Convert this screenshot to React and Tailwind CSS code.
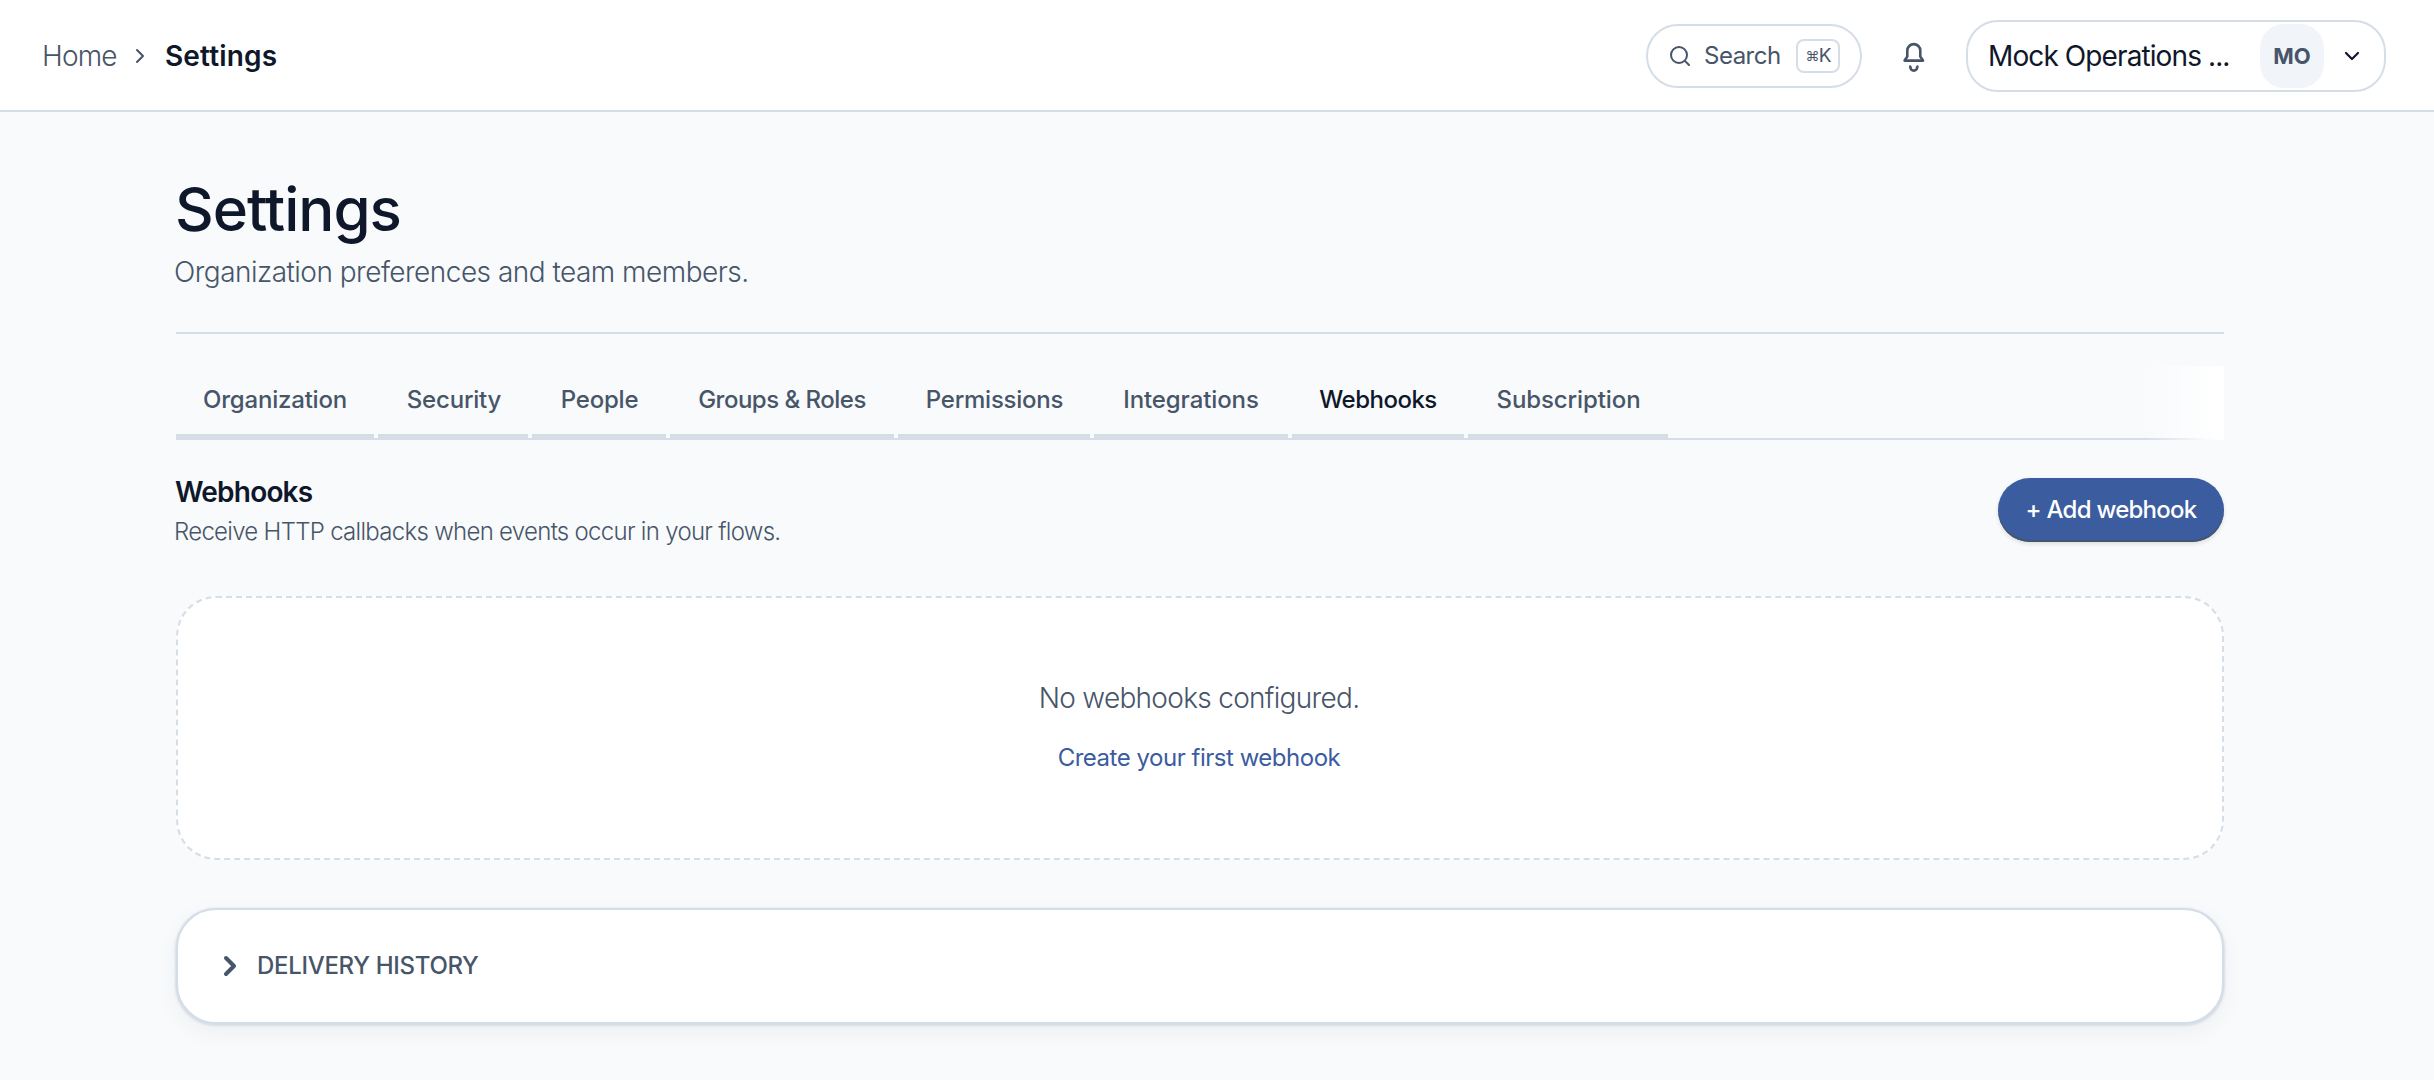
const tabs = [
  { label: 'Organization', box: 'w-[198px]', text: 'tracking-[-0.2px]' },
  { label: 'Security', box: 'w-[150px]', text: 'pl-0.5 tracking-[-0.2px]' },
  { label: 'People', box: 'w-[134px]', text: 'pl-px tracking-[-0.2px]' },
  { label: 'Groups & Roles', box: 'w-[224px]', text: 'tracking-[-0.5px]' },
  { label: 'Permissions', box: 'w-[192px]', text: 'pl-px tracking-[-0.25px]' },
  { label: 'Integrations', box: 'w-[194px]', text: 'tracking-[-0.1px]' },
  { label: 'Webhooks', box: 'w-[172px]', text: 'tracking-[-0.5px]', active: true },
  { label: 'Subscription', box: 'w-[200px]', text: 'pl-px tracking-[-0.1px]' },
];

function Icon({ className, d, strokeWidth = 2 }) {
  return (
    <svg className={className} viewBox="0 0 24 24" fill="none" stroke="currentColor" strokeWidth={strokeWidth} strokeLinecap="round" strokeLinejoin="round">
      <path d={d} />
    </svg>
  );
}

function BellIcon({ className }) {
  return (
    <svg className={className} viewBox="0 0 32 36" fill="none" stroke="currentColor" strokeWidth="2.6" strokeLinecap="round" strokeLinejoin="round">
      <path d="M6.600 22.600L9.300 18.600V12.600a6.500 6.500 0 0 1 13 0V18.600L25 22.600z" />
      <path d="M12.200 28.600c.3 2.600 1.600 4 3.600 4s3.300-1.400 3.600-4" />
    </svg>
  );
}

function Header() {
  return (
    <header className="flex h-28 items-center justify-between border-b-2 border-[#d5dde7] bg-white pt-0.5 pr-12 pl-[42px]">
      <nav className="flex items-center text-[28px] leading-10">
        <a className="w-[86px] font-light tracking-[-0.8px] whitespace-nowrap">Home</a>
        <Icon className="size-6" d="m9 18 6-6-6-6" />
        <span className="ml-[13px] font-semibold tracking-[0.15px] text-[#0f172a]">Settings</span>
      </nav>
      <div className="flex items-center">
        <button className="flex h-16 w-[216px] items-center rounded-full border-2 border-[#d5dde7] pl-5">
          <Icon className="size-6" d="m21 21-4.34-4.34M19 11a8 8 0 1 1-16 0 8 8 0 0 1 16 0z" />
          <span className="ml-3 w-[92px] text-left text-2xl tracking-[-0.5px]">Search</span>
          <kbd className="flex h-[34px] w-11 items-center justify-center rounded-lg border-2 border-[#d5dde7] font-['Inter','DejaVu_Sans',sans-serif] text-[19px] tracking-[-1px]">
            <span className="text-sm">⌘</span>K
          </kbd>
        </button>
        <BellIcon className="mx-9 h-9 w-8" />
        <button className="flex h-[72px] w-[420px] items-center rounded-[32px] border-2 border-[#d5dde7] pl-5 text-[#0f172a]">
          <span className="w-[272px] text-left text-[28px] tracking-[-0.9px] whitespace-nowrap">Mock Operations ...</span>
          <span className="flex size-16 items-center justify-center rounded-3xl bg-[#f1f4f8] text-[22px] font-bold text-[#475569]">MO</span>
          <Icon className="ml-4 size-6" d="m6 9 6 6 6-6" strokeWidth={2.2} />
        </button>
      </div>
    </header>
  );
}

export default function App() {
  return (
    <div className="h-[1080px] overflow-hidden bg-[#f8fafc] font-['Inter','Noto_Sans',sans-serif] text-[#475569]">
      <Header />
      <main className="ml-44 w-[2048px] pt-[66px]">
        <div className="h-[156px] border-b-2 border-[#d5dde7]">
          <h1 className="-ml-px text-[60px] leading-[62px] font-medium tracking-[-1px] text-[#0f172a]">Settings</h1>
          <p className="mt-3 -ml-0.5 text-[28px] leading-10 font-light tracking-[-0.52px]">Organization preferences and team members.</p>
        </div>

        <div className="relative mt-8 flex h-[74px] gap-1 border-b-2 border-[#d5dde7]">
          {tabs.map((tab) => (
            <button
              key={tab.label}
              className={`${tab.box} ${tab.text} flex h-[72px] items-center justify-center border-b-4 border-[#d5dde7] text-2xl font-medium whitespace-nowrap ${tab.active ? 'text-[#0f172a]' : ''}`}
            >
              {tab.label}
            </button>
          ))}
          <div className="absolute top-0 right-0 h-[74px] w-20 bg-linear-to-r from-transparent to-white to-90%" />
        </div>

        <div className="mt-8 flex items-start justify-between">
          <div className="-ml-px">
            <h2 className="text-[28px] leading-10 font-semibold tracking-[-0.8px] text-[#0f172a]">Webhooks</h2>
            <p className="-ml-px text-2xl leading-10 font-light tracking-[-0.71px]">Receive HTTP callbacks when events occur in your flows.</p>
          </div>
          <button className="mt-1.5 h-16 w-[226px] rounded-full bg-[#3b5c9f] text-2xl font-medium tracking-[-0.75px] text-white shadow-[inset_0_-2px_0_#475569,0_2px_4px_rgba(15,23,42,0.12)]">
            + Add webhook
          </button>
        </div>

        <section className="mt-11 flex h-[264px] flex-col items-center rounded-[40px] border-2 border-dashed border-[#d5dde7] bg-white pt-20 pr-0.5">
          <p className="text-[28px] leading-10 font-light tracking-[-0.7px]">No webhooks configured.</p>
          <a className="mt-5 text-2xl leading-10 tracking-[-0.48px] text-[#3b5c9f]">Create your first webhook</a>
        </section>

        <section className="mt-12 flex h-[116px] items-center rounded-[40px] border-2 border-[#d5dde7] bg-white pl-9 shadow-[0_1px_2px_1px_#d5dde7,0_8px_24px_rgba(15,23,42,0.05)]">
          <Icon className="size-8" d="m9 18 6-6-6-6" strokeWidth={3} />
          <span className="ml-[11px] text-2xl font-medium tracking-[-0.3px]">DELIVERY HISTORY</span>
        </section>
      </main>
    </div>
  );
}
